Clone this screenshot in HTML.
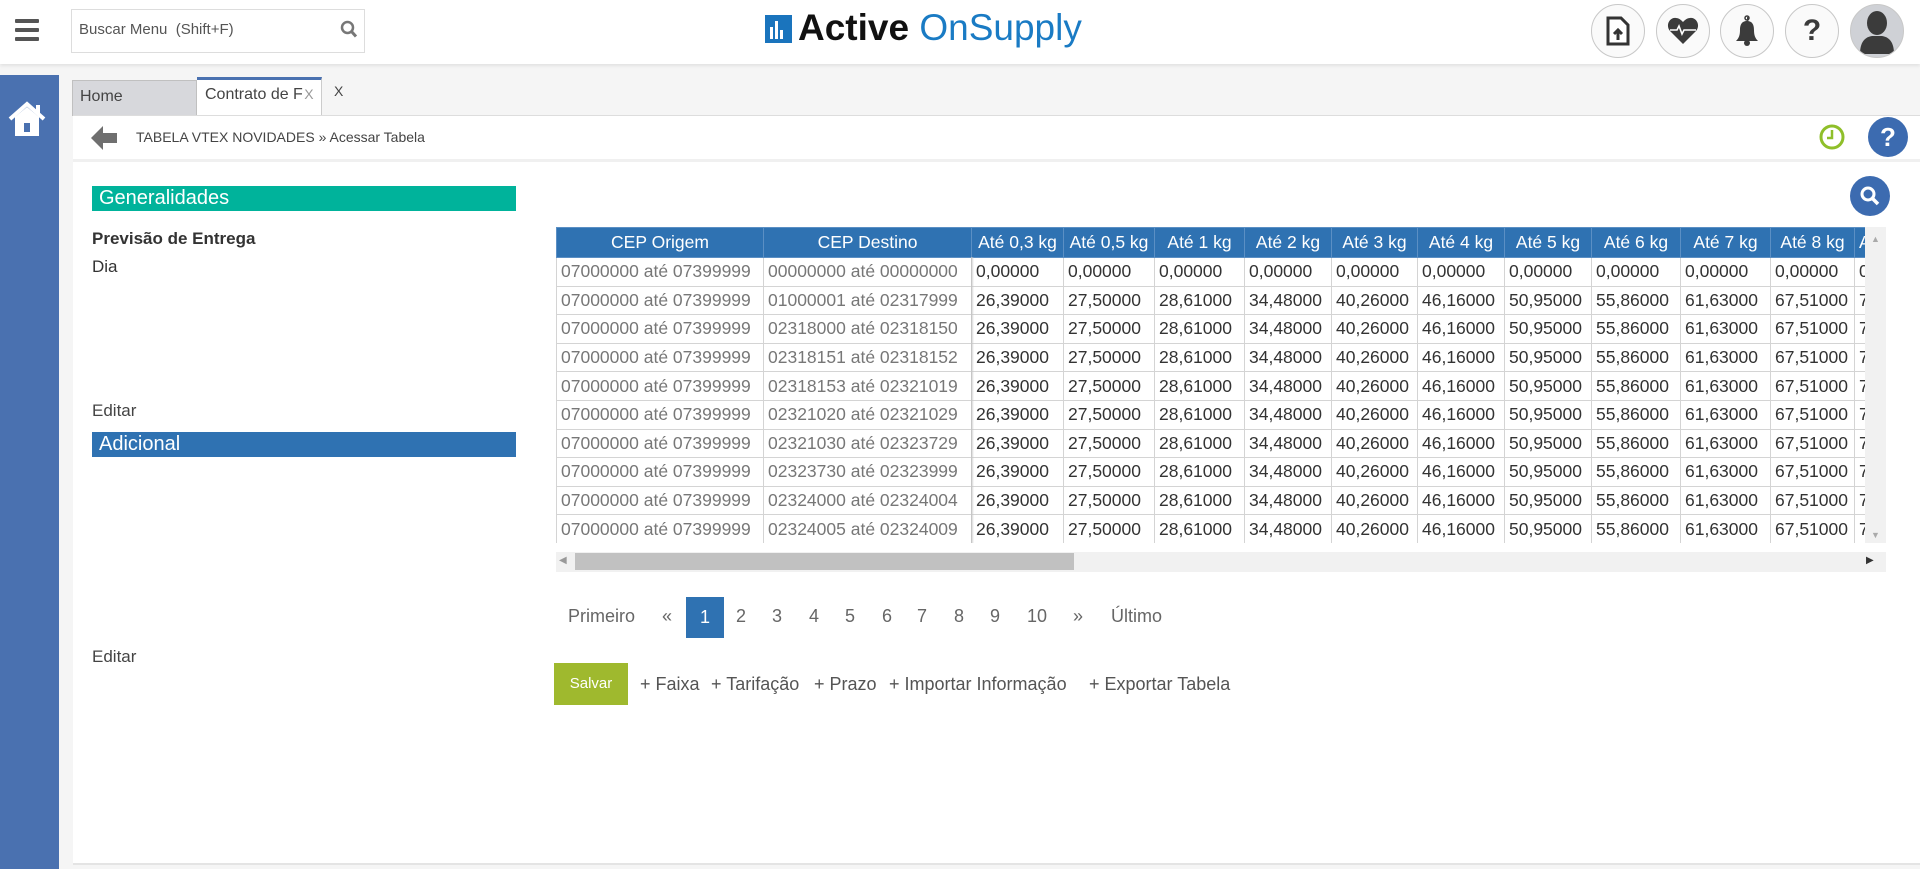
<!DOCTYPE html>
<html><head><meta charset="utf-8"><style>
*{box-sizing:border-box;margin:0;padding:0}
body{width:1920px;height:869px;overflow:hidden;background:#f5f5f5;font-family:"Liberation Sans",sans-serif;position:relative;color:#333}
.a{position:absolute}
.hdr{left:0;top:0;width:1920px;height:64px;background:#fff;box-shadow:0 2px 3px rgba(0,0,0,.08)}
.ic{width:54px;height:54px;border-radius:50%;border:1px solid #c8c8c8;background:#fafafa;top:4px;display:flex;align-items:center;justify-content:center}
table{border-collapse:collapse;font-size:17.5px;table-layout:fixed}
td,th{height:28.6px;border:1px solid #d4d4d4;padding:0 4px;white-space:nowrap;overflow:hidden;text-align:left}
th{background:#2f72b2;color:#fff;font-weight:normal;text-align:center;height:30px;border-color:#5b8fc4}
td.g{color:#777}
.pg{top:606px;font-size:18px;color:#666}
.lk{top:674px;font-size:18px;color:#555}
</style></head><body>
<div class="a hdr"></div>
<div class="a" style="left:15px;top:19px;width:24px;height:4px;background:#555;box-shadow:0 9px 0 #555,0 18px 0 #555;border-radius:1px"></div>
<div class="a" style="left:71px;top:9px;width:294px;height:44px;border:1px solid #ddd;background:#fff"></div>
<div class="a" style="left:79px;top:21px;font-size:15px;color:#555">Buscar Menu &nbsp;(Shift+F)</div>
<svg class="a" style="left:340px;top:20px" width="18" height="20" viewBox="0 0 18 20"><circle cx="7.5" cy="7.5" r="5.5" fill="none" stroke="#777" stroke-width="2.5"/><path d="M11.5 11.5L16 16.5" stroke="#777" stroke-width="3"/></svg>
<svg class="a" style="left:765px;top:15px" width="27" height="28"><rect width="27" height="28" fill="#1a74bd"/><rect x="5" y="12" width="3" height="12" fill="#fff"/><rect x="10" y="6" width="3" height="18" fill="#fff"/><rect x="15" y="15" width="3" height="9" fill="#fff"/></svg>
<div class="a" style="left:798px;top:7px;font-size:37px;white-space:nowrap"><b style="color:#111">Active</b> <span style="color:#1a7bc4">OnSupply</span></div>
<div class="a ic" style="left:1591px"><svg width="26" height="30" viewBox="0 0 26 30"><path d="M3 2h13l7 7v19H3z" fill="#fff" stroke="#333" stroke-width="3"/><path d="M13 24v-9M9 18l4-4 4 4" stroke="#333" stroke-width="3" fill="none"/></svg></div>
<div class="a ic" style="left:1656px"><svg width="32" height="28" viewBox="0 0 32 28"><path d="M16 27L3 14C-2 8 3 0 9 1c3 0 5 2 7 4 2-2 4-4 7-4 6-1 11 7 6 13z" fill="#3b3b3b"/><path d="M3 13h7l2-4 3 8 2-4h12" stroke="#fff" stroke-width="1.6" fill="none"/></svg></div>
<div class="a ic" style="left:1720px"><svg width="26" height="32" viewBox="0 0 26 32"><path d="M13 2a2 2 0 0 1 0 4C7 6 6 11 6 15c0 5-1 8-4 11h22c-3-3-4-6-4-11 0-4-1-9-7-9z" fill="#3b3b3b"/><circle cx="13" cy="28" r="3" fill="#3b3b3b"/><circle cx="13" cy="3" r="2" fill="none" stroke="#3b3b3b" stroke-width="1.5"/></svg></div>
<div class="a ic" style="left:1785px;font-size:30px;font-weight:bold;color:#3b3b3b">?</div>
<div class="a ic" style="left:1850px;background:#cfd1d6;overflow:hidden"><svg width="40" height="46" viewBox="0 0 40 46"><ellipse cx="20" cy="15" rx="10" ry="12" fill="#3b3b3b"/><path d="M3 46c0-12 5-17 12-18h10c7 1 12 6 12 18z" fill="#3b3b3b"/></svg></div>

<div class="a" style="left:0;top:75px;width:59px;height:794px;background:#4a71b0"></div>
<svg class="a" style="left:7px;top:99px" width="40" height="40" viewBox="0 0 40 40"><path d="M3 20L20 5l17 15" fill="none" stroke="#fff" stroke-width="4"/><path d="M8 18v19h24V18L20 8z" fill="#fff"/><rect x="17" y="24" width="6" height="9" fill="#4a71b0"/><rect x="29" y="6" width="4" height="9" fill="#fff"/></svg>

<div class="a" style="left:72px;top:80px;width:125px;height:36px;background:#d7d8dc;border:1px solid #c0c0c0"></div>
<div class="a" style="left:80px;top:88px;font-size:16px;color:#444">Home</div>
<div class="a" style="left:197px;top:77px;width:125px;height:40px;background:#fff;border-top:3px solid #4a71b0;border-right:1px solid #ccc"></div>
<div class="a" style="left:205px;top:86px;font-size:16px;color:#444">Contrato de F <span style="color:#999;font-size:14px;margin-left:-3px">X</span></div>
<div class="a" style="left:334px;top:83px;font-size:14px;color:#444">X</div>

<div class="a" style="left:73px;top:115px;width:1847px;height:750px;background:#fff;border-top:1px solid #ddd;border-bottom:2px solid #e4e4e4"></div>
<div class="a" style="left:73px;top:159px;width:1847px;height:3px;background:#f0f0f0"></div>
<svg class="a" style="left:90px;top:124px" width="28" height="28" viewBox="0 0 28 28"><path d="M1 14L13 2v7h14v10H13v7z" fill="#6f6f6f"/></svg>
<div class="a" style="left:136px;top:129px;font-size:14px;color:#444">TABELA VTEX NOVIDADES » Acessar Tabela</div>
<svg class="a" style="left:1818px;top:123px" width="28" height="28"><circle cx="14" cy="14" r="11" fill="none" stroke="#8fbf2a" stroke-width="3"/><path d="M14 7v8h-5" stroke="#8fbf2a" stroke-width="2.5" fill="none"/></svg>
<div class="a" style="left:1868px;top:117px;width:40px;height:40px;border-radius:50%;background:#3c6bb0;color:#fff;font-weight:bold;font-size:26px;text-align:center;line-height:40px">?</div>

<div class="a" style="left:92px;top:186px;width:424px;height:25px;background:#00b39b;color:#fff;font-size:20px;padding-left:7px;line-height:25px">Generalidades</div>
<div class="a" style="left:92px;top:229px;font-size:17px;font-weight:bold;color:#333">Previsão de Entrega</div>
<div class="a" style="left:92px;top:257px;font-size:17px;color:#333">Dia</div>
<div class="a" style="left:92px;top:401px;font-size:17px;color:#444">Editar</div>
<div class="a" style="left:92px;top:432px;width:424px;height:25px;background:#2f72b2;color:#fff;font-size:20px;padding-left:7px;line-height:25px">Adicional</div>
<div class="a" style="left:92px;top:647px;font-size:17px;color:#444">Editar</div>

<div class="a" style="left:1850px;top:176px;width:40px;height:40px;border-radius:50%;background:#3c6bb0"></div>
<svg class="a" style="left:1859px;top:185px" width="22" height="22"><circle cx="9" cy="9" r="6" fill="none" stroke="#fff" stroke-width="3"/><path d="M13 13l6 6" stroke="#fff" stroke-width="3.5"/></svg>

<div class="a" style="left:556px;top:227px;width:1309px;height:316px;overflow:hidden">
<table style="width:1420px">
<colgroup><col style="width:207px"><col style="width:208px"><col style="width:92px"><col style="width:91px"><col style="width:90px"><col style="width:87px"><col style="width:86px"><col style="width:87px"><col style="width:87px"><col style="width:89px"><col style="width:90px"><col style="width:84px"><col style="width:122px"></colgroup>
<tr><th>CEP Origem</th><th>CEP Destino</th><th>Até 0,3 kg</th><th>Até 0,5 kg</th><th>Até 1 kg</th><th>Até 2 kg</th><th>Até 3 kg</th><th>Até 4 kg</th><th>Até 5 kg</th><th>Até 6 kg</th><th>Até 7 kg</th><th>Até 8 kg</th><th style="text-align:left">Até 9 kg</th></tr>
<tr><td class="g">07000000 até 07399999</td><td class="g">00000000 até 00000000</td><td>0,00000</td><td>0,00000</td><td>0,00000</td><td>0,00000</td><td>0,00000</td><td>0,00000</td><td>0,00000</td><td>0,00000</td><td>0,00000</td><td>0,00000</td><td>0,00000</td></tr>
<tr><td class="g">07000000 até 07399999</td><td class="g">01000001 até 02317999</td><td>26,39000</td><td>27,50000</td><td>28,61000</td><td>34,48000</td><td>40,26000</td><td>46,16000</td><td>50,95000</td><td>55,86000</td><td>61,63000</td><td>67,51000</td><td>73,39000</td></tr>
<tr><td class="g">07000000 até 07399999</td><td class="g">02318000 até 02318150</td><td>26,39000</td><td>27,50000</td><td>28,61000</td><td>34,48000</td><td>40,26000</td><td>46,16000</td><td>50,95000</td><td>55,86000</td><td>61,63000</td><td>67,51000</td><td>73,39000</td></tr>
<tr><td class="g">07000000 até 07399999</td><td class="g">02318151 até 02318152</td><td>26,39000</td><td>27,50000</td><td>28,61000</td><td>34,48000</td><td>40,26000</td><td>46,16000</td><td>50,95000</td><td>55,86000</td><td>61,63000</td><td>67,51000</td><td>73,39000</td></tr>
<tr><td class="g">07000000 até 07399999</td><td class="g">02318153 até 02321019</td><td>26,39000</td><td>27,50000</td><td>28,61000</td><td>34,48000</td><td>40,26000</td><td>46,16000</td><td>50,95000</td><td>55,86000</td><td>61,63000</td><td>67,51000</td><td>73,39000</td></tr>
<tr><td class="g">07000000 até 07399999</td><td class="g">02321020 até 02321029</td><td>26,39000</td><td>27,50000</td><td>28,61000</td><td>34,48000</td><td>40,26000</td><td>46,16000</td><td>50,95000</td><td>55,86000</td><td>61,63000</td><td>67,51000</td><td>73,39000</td></tr>
<tr><td class="g">07000000 até 07399999</td><td class="g">02321030 até 02323729</td><td>26,39000</td><td>27,50000</td><td>28,61000</td><td>34,48000</td><td>40,26000</td><td>46,16000</td><td>50,95000</td><td>55,86000</td><td>61,63000</td><td>67,51000</td><td>73,39000</td></tr>
<tr><td class="g">07000000 até 07399999</td><td class="g">02323730 até 02323999</td><td>26,39000</td><td>27,50000</td><td>28,61000</td><td>34,48000</td><td>40,26000</td><td>46,16000</td><td>50,95000</td><td>55,86000</td><td>61,63000</td><td>67,51000</td><td>73,39000</td></tr>
<tr><td class="g">07000000 até 07399999</td><td class="g">02324000 até 02324004</td><td>26,39000</td><td>27,50000</td><td>28,61000</td><td>34,48000</td><td>40,26000</td><td>46,16000</td><td>50,95000</td><td>55,86000</td><td>61,63000</td><td>67,51000</td><td>73,39000</td></tr>
<tr><td class="g">07000000 até 07399999</td><td class="g">02324005 até 02324009</td><td>26,39000</td><td>27,50000</td><td>28,61000</td><td>34,48000</td><td>40,26000</td><td>46,16000</td><td>50,95000</td><td>55,86000</td><td>61,63000</td><td>67,51000</td><td>73,39000</td></tr>
</table></div>
<div class="a" style="left:971px;top:257px;width:3px;height:286px;background:linear-gradient(90deg,#c4c4c4,rgba(0,0,0,0))"></div>
<div class="a" style="left:1865px;top:227px;width:21px;height:316px;background:#f1f1f1"></div>
<div class="a" style="left:1871px;top:234px;font-size:9px;color:#aaa">▲</div>
<div class="a" style="left:1871px;top:530px;font-size:9px;color:#aaa">▼</div>
<div class="a" style="left:556px;top:552px;width:1330px;height:20px;background:#f1f1f1"></div>
<div class="a" style="left:575px;top:553px;width:499px;height:17px;background:#c1c1c1"></div>
<div class="a" style="left:559px;top:555px;font-size:10px;color:#999">◀</div>
<div class="a" style="left:1866px;top:555px;font-size:10px;color:#333">▶</div>

<div class="a pg" style="left:568px">Primeiro</div>
<div class="a pg" style="left:662px">«</div>
<div class="a" style="left:686px;top:597px;width:38px;height:41px;background:#2f72b2;color:#fff;font-size:18px;text-align:center;line-height:41px">1</div>
<div class="a pg" style="left:736px">2</div>
<div class="a pg" style="left:772px">3</div>
<div class="a pg" style="left:809px">4</div>
<div class="a pg" style="left:845px">5</div>
<div class="a pg" style="left:882px">6</div>
<div class="a pg" style="left:917px">7</div>
<div class="a pg" style="left:954px">8</div>
<div class="a pg" style="left:990px">9</div>
<div class="a pg" style="left:1027px">10</div>
<div class="a pg" style="left:1073px">»</div>
<div class="a pg" style="left:1111px">Último</div>

<div class="a" style="left:554px;top:663px;width:74px;height:42px;background:#9fb92e;color:#fff;font-size:15px;text-align:center;line-height:42px">Salvar</div>
<div class="a lk" style="left:640px">+ Faixa</div>
<div class="a lk" style="left:711px">+ Tarifação</div>
<div class="a lk" style="left:814px">+ Prazo</div>
<div class="a lk" style="left:889px">+ Importar Informação</div>
<div class="a lk" style="left:1089px">+ Exportar Tabela</div>
</body></html>
